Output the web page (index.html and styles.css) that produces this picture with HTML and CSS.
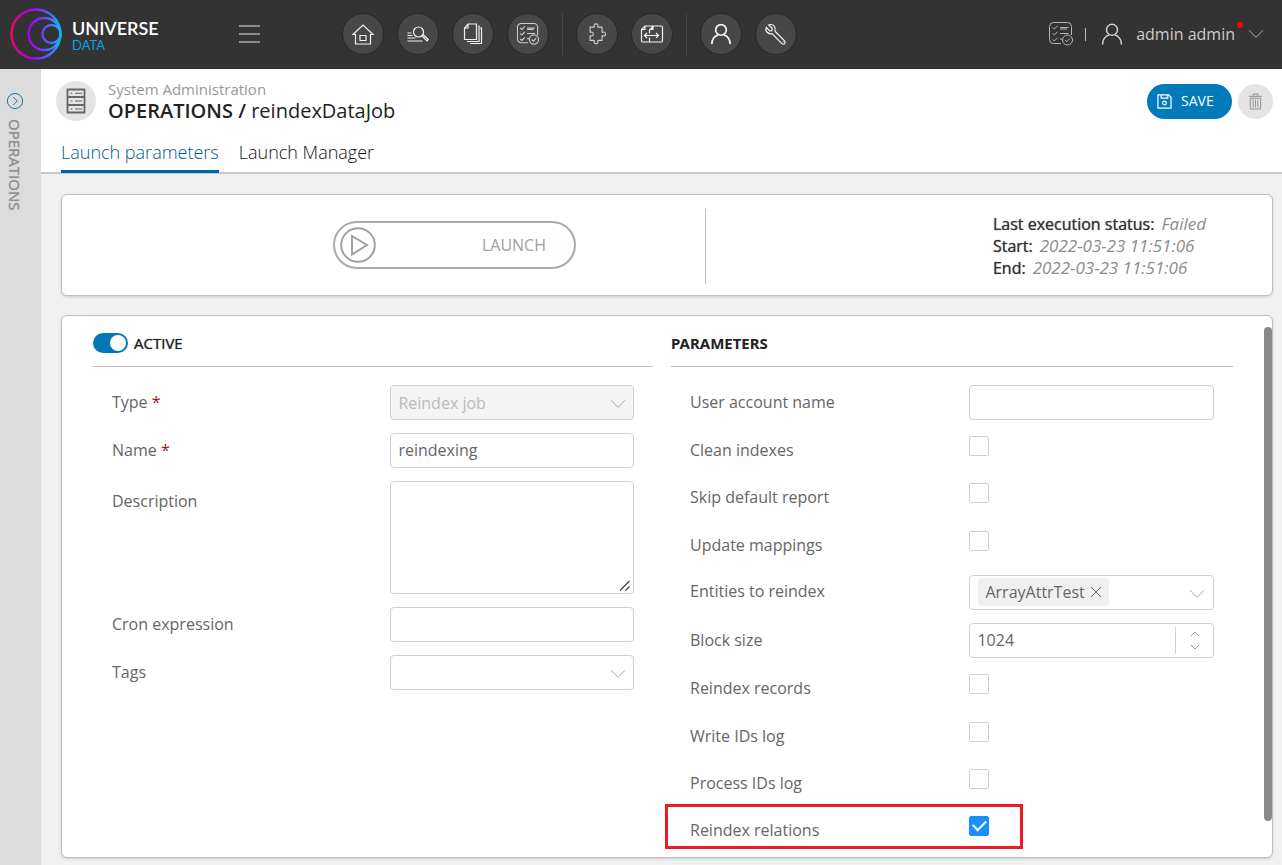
FILE: index.html
```html
<!DOCTYPE html>
<html lang="en">
<head>
<meta charset="utf-8">
<title>Universe Data - Operations</title>
<meta name="viewport" content="width=device-width, initial-scale=1">
<link rel="stylesheet" href="styles.css">
</head>
<body>
<svg class="defs" aria-hidden="true">
  <symbol id="i-chevron" viewBox="0 0 16 10"><path d="M1 1.200l7 7.200 7-7.200"/></symbol>
  <symbol id="i-tasks" viewBox="0 0 24 24">
    <path d="M12 21.500H4.500a4 4 0 0 1-4-4V4.500a4 4 0 0 1 4-4h14a4 4 0 0 1 4 4V13"/>
    <path d="M3.500 5.500l1.800 1.500 3.200-3.200M3.500 11.500l1.800 1.500 3.200-3.200M3.500 17.500l1.800 1.500 3.200-3.200M11 5.500h8.500M11 7h7M11 11.500h8.500M11 17h2"/>
    <circle cx="18.500" cy="18" r="5"/><path d="M16 18l1.800 1.800 3.200-3.400"/>
  </symbol>
  <symbol id="i-user" viewBox="0 0 22 22"><circle cx="11" cy="6.800" r="5.500"/><path d="M1.500 21.500c0-5 3-8.700 6.500-9.500M20.500 21.500c0-5-3-8.700-6.500-9.500"/></symbol>
</svg>

<header class="topbar">
  <a class="logo" href="#">
    <svg class="logo-mark" viewBox="0 0 52 52" aria-hidden="true">
      <defs><linearGradient id="ring" gradientUnits="userSpaceOnUse" x1="1" y1="0" x2="51" y2="0">
        <stop offset="0" stop-color="#ff0066"/><stop offset=".38" stop-color="#a400f5"/><stop offset=".52" stop-color="#8a1cff"/><stop offset="1" stop-color="#14b4f5"/>
      </linearGradient></defs>
      <g fill="none" stroke="url(#ring)" stroke-width="2.300"><circle cx="26" cy="26" r="24.500"/><circle cx="34.500" cy="26" r="16"/><circle cx="41.500" cy="26" r="9"/></g>
    </svg>
    <span class="logo-text"><span class="logo-name">UNIVERSE</span><span class="logo-sub">DATA</span></span>
  </a>
  <button class="burger" type="button" aria-label="Menu"><span></span><span></span><span></span></button>
  <nav class="nav" aria-label="Sections">
    <button type="button" class="nav-btn" aria-label="Home"><svg viewBox="0 0 24 24"><path d="M2 12.500L12 3l10 9.500h-2.500V22h-15v-9.500zM9 13.500h6v5H9z"/></svg></button>
    <button type="button" class="nav-btn" aria-label="Search"><svg viewBox="0 0 24 24"><path d="M1.500 11h4M1.500 13.500h5M1.500 16h8M1.500 19h15"/><circle cx="12.500" cy="10" r="5"/><path d="M15.700 13.500l5.300 5.300 1.300-1.300-5.500-5.200"/></svg></button>
    <button type="button" class="nav-btn" aria-label="Documents"><svg viewBox="0 0 24 24"><path d="M7 2h8.500v15.500H3.500V6zM7 2v4H3.500M17 4h1v15.500H6M19 6h1.500v15.500H9M3.500 6v12"/></svg></button>
    <button type="button" class="nav-btn nav-soft" aria-label="Tasks"><svg><use href="#i-tasks"/></svg></button>
    <span class="nav-sep"></span>
    <button type="button" class="nav-btn nav-soft" aria-label="Modules"><svg viewBox="0 0 24 24"><path d="M4.500 4.500h4c1.500 0 .3-.9.300-1.700 0-2.400 4.400-2.400 4.400 0 0 .8-1.200 1.700.3 1.700h4v5c0 1.500.9.300 1.700.300 2.800 0 2.800 4.400 0 4.400-.8 0-1.700-1.200-1.700.3v4.500h-4c-1.500 0-.3.900-.3 1.700 0 2.400-4.400 2.400-4.400 0 0-.8 1.200-1.700-.3-1.700h-4v-4.500c0-1.500.9-.3 1.700-.3 2.400 0 2.400-4.400 0-4.400-.8 0-1.700 1.200-1.700-.3z"/></svg></button>
    <button type="button" class="nav-btn" aria-label="Mapping"><svg viewBox="0 0 24 24"><path d="M5 4h16q1.500 0 1.500 1.500v13q0 1.500-1.500 1.500H3q-1.500 0-1.500-1.500V7.500zM5 4v3.500H1.500M13 4.500L9.500 8v3.500M9.500 15.500V20M13 4v3.500H9.500M5 13.500h13M7 11l-2.500 2.500L7 16M16 11l2.500 2.500L16 16"/></svg></button>
    <span class="nav-sep"></span>
    <button type="button" class="nav-btn nav-bold" aria-label="Users"><svg viewBox="-1.500 -1.500 26 26"><use href="#i-user" width="23" height="23"/></svg></button>
    <button type="button" class="nav-btn" aria-label="Settings"><svg viewBox="0 0 24 24"><path d="M6 2.600c-.8.100-1.400.4-1.400.4l3.600 3.300-.3 2.300-2.300.3-3.300-3.500C.8 9 4 12.600 8.300 11.800l9.600 9.800q1.500 1.200 2.700 0t0-2.700L11 9.200C12 5 9.500 2 6 2.600zM18.800 19.500l.5.500"/></svg></button>
  </nav>
  <div class="account">
    <button type="button" class="plain" aria-label="Task list"><svg class="ico-tasks"><use href="#i-tasks"/></svg></button>
    <span class="account-sep"></span>
    <button type="button" class="plain user">
      <svg class="ico-user"><use href="#i-user"/></svg>
      <span class="user-name">admin admin<span class="dot"></span></span>
      <svg class="chev"><use href="#i-chevron"/></svg>
    </button>
  </div>
</header>

<div class="body">
  <aside class="rail">
    <button type="button" class="plain rail-btn" aria-label="Expand panel"><svg viewBox="0 0 18 18"><circle cx="9" cy="9" r="7.600"/><path d="M7.300 5l4 4-4 4"/></svg></button>
    <span class="rail-title">OPERATIONS</span>
  </aside>

  <main class="main">
    <div class="page-head">
      <div class="title-row">
        <span class="title-icon"><svg viewBox="0 0 20 26" aria-hidden="true"><path d="M1.500 1.500h17v23h-17zM1.500 9h17M1.500 17h17"/><path class="thin" d="M9 5.300h7M9 13h7M9 21h7M4.500 5.300h2M4.500 13h2M4.500 21h2"/></svg></span>
        <div class="titles">
          <div class="section">System Administration</div>
          <h1><b>OPERATIONS /</b> reindexDataJob</h1>
        </div>
        <button type="button" class="save"><svg viewBox="0 0 16 16" aria-hidden="true"><path d="M1 1h11.500L15 3.500V15H1zM4.500 1v3.500h7V1"/><circle cx="8" cy="9.500" r="2"/></svg>SAVE</button>
        <button type="button" class="trash" aria-label="Delete"><svg viewBox="0 0 16 18"><path d="M1 3.500h14M5.500 3V1h5v2M2.500 5.500h11v11.500h-11zM5.500 7v8.500M8 7v8.500M10.500 7v8.500"/></svg></button>
      </div>
      <div class="tabs" role="tablist">
        <button type="button" role="tab" class="tab active" aria-selected="true">Launch parameters</button>
        <button type="button" role="tab" class="tab" aria-selected="false">Launch Manager</button>
      </div>
    </div>

    <div class="content">
      <section class="card launch">
        <div class="launch-left">
          <button type="button" class="launch-btn"><svg viewBox="0 0 36 36" aria-hidden="true"><circle cx="18" cy="18" r="16.800"/><path d="M12 9l15 9-15 9.500z"/></svg><span>LAUNCH</span></button>
        </div>
        <div class="launch-right">
          <div class="status">
            <div><b>Last execution status:</b><i>Failed</i></div>
            <div><b>Start:</b><i>2022-03-23 11:51:06</i></div>
            <div><b>End:</b><i>2022-03-23 11:51:06</i></div>
          </div>
        </div>
      </section>

      <section class="card params">
        <div class="col">
          <div class="col-head"><input type="checkbox" class="switch" id="active" checked><label for="active">ACTIVE</label></div>
          <div class="form">
            <div class="row"><label for="type">Type <em>*</em></label><span class="field"><select id="type" disabled><option>Reindex job</option></select><svg class="chev"><use href="#i-chevron"/></svg></span></div>
            <div class="row"><label for="name">Name <em>*</em></label><span class="field"><input id="name" type="text" value="reindexing"></span></div>
            <div class="row row-area"><label for="desc">Description</label><span class="field"><textarea id="desc"></textarea><svg class="grip" viewBox="0 0 12 12"><path d="M1 10.500l9.500-9.500M6.500 10.500l4-4"/></svg></span></div>
            <div class="row"><label for="cron">Cron expression</label><span class="field"><input id="cron" type="text"></span></div>
            <div class="row"><label for="tags">Tags</label><span class="field"><select id="tags"><option></option></select><svg class="chev"><use href="#i-chevron"/></svg></span></div>
          </div>
        </div>
        <div class="col">
          <div class="col-head"><h2>PARAMETERS</h2></div>
          <div class="form form-spread">
            <div class="row"><label for="user">User account name</label><span class="field"><input id="user" type="text"></span></div>
            <div class="row check"><label for="clean">Clean indexes</label><input type="checkbox" class="box" id="clean"></div>
            <div class="row check"><label for="skip">Skip default report</label><input type="checkbox" class="box" id="skip"></div>
            <div class="row check"><label for="upd">Update mappings</label><input type="checkbox" class="box" id="upd"></div>
            <div class="row"><label for="ent">Entities to reindex</label><span class="field multi"><span class="chip">ArrayAttrTest<button type="button" class="plain" aria-label="Remove ArrayAttrTest"><svg viewBox="0 0 12 12"><path d="M1 1l10 10M11 1L1 11"/></svg></button></span><input id="ent" type="text"><svg class="chev"><use href="#i-chevron"/></svg></span></div>
            <div class="row"><label for="block">Block size</label><span class="field"><input id="block" type="number" value="1024"><span class="spin"><button type="button" class="plain" aria-label="Increase"><svg viewBox="0 0 10 6"><path d="M1 5l4-4 4 4"/></svg></button><button type="button" class="plain" aria-label="Decrease"><svg viewBox="0 0 10 6"><path d="M1 1l4 4 4-4"/></svg></button></span></span></div>
            <div class="row check"><label for="rec">Reindex records</label><input type="checkbox" class="box" id="rec"></div>
            <div class="row check"><label for="wlog">Write IDs log</label><input type="checkbox" class="box" id="wlog"></div>
            <div class="row check"><label for="plog">Process IDs log</label><input type="checkbox" class="box" id="plog"></div>
            <div class="row check marked"><label for="rel">Reindex relations</label><input type="checkbox" class="box" id="rel" checked></div>
          </div>
        </div>
        <span class="thumb"></span>
      </section>
    </div>
  </main>
</div>
</body>
</html>
```
FILE: styles.css
```css
* { box-sizing: border-box; }
body {
  margin: 0;
  min-height: 100vh;
  display: flex;
  flex-direction: column;
  font: 16px/22px "Open Sans", "Noto Sans", sans-serif;
  color: #666;
  background: #f1f1f1;
}
button, input, select, textarea { font: inherit; color: inherit; }
button { cursor: pointer; }
svg { display: block; fill: none; stroke: currentColor; overflow: visible; }
.defs { position: absolute; width: 0; height: 0; }
.plain { border: 0; padding: 0; background: none; }

/* top bar */
.topbar {
  display: flex;
  align-items: center;
  height: 69px;
  padding: 0 18px 1px 10px;
  background: #333;
}
.logo { display: flex; align-items: center; gap: 10px; width: 229px; text-decoration: none; }
.logo-mark { width: 52px; height: 52px; }
.logo-text { display: flex; flex-direction: column; padding-top: 3px; font-family: Lato, sans-serif; }
.logo-name { font-size: 18px; line-height: 18px; font-weight: 600; color: #fff; }
.logo-sub { font-size: 13px; line-height: 16px; color: #00a4e4; }
.burger {
  display: flex;
  flex-direction: column;
  gap: 6px;
  width: 21px;
  padding: 0;
  border: 0;
  background: none;
}
.burger span { height: 2px; background: #8c8c8c; }
.nav { display: flex; align-items: center; gap: 13px; margin-left: 82px; }
.nav-btn {
  display: flex;
  align-items: center;
  justify-content: center;
  width: 42px;
  height: 42px;
  padding: 0;
  border: 1px solid #282828;
  border-radius: 50%;
  background: #474747;
  color: #f2f2f2;
}
.nav-btn svg { width: 24px; height: 24px; stroke-width: 1.200; }
.nav-soft { color: #ccc; }
.nav-btn.nav-soft svg { width: 22px; height: 22px; }
.nav-btn.nav-bold svg { stroke-width: 1.800; }
.nav-sep { width: 1px; height: 42px; background: #474747; }
.account { display: flex; align-items: center; margin-left: auto; color: #ccc; }
.ico-tasks { width: 24px; height: 24px; color: #b5b5b5; }
.account-sep { width: 1px; height: 13px; margin: 0 15px 0 12px; background: #bbb; }
.user { display: flex; align-items: center; gap: 13px; }
.ico-user { width: 22px; height: 22px; stroke-width: 1.500; }
.user-name { position: relative; }
.dot { position: absolute; top: -1px; right: -8px; width: 6px; height: 6px; border-radius: 50%; background: #f00; }
.chev { width: 16px; height: 10px; color: #aaa; stroke-width: 1; }

/* side rail */
.body { flex: 1; display: flex; }
.rail {
  display: flex;
  flex-direction: column;
  align-items: center;
  gap: 9px;
  width: 41px;
  padding: 23px 11px 0 0;
  background: #dcdcdc;
}
.rail-btn { color: #1878ab; }
.rail-btn svg { width: 18px; height: 18px; }
.rail-title { writing-mode: vertical-rl; font-size: 15px; line-height: 20px; color: #8c8c8c; text-shadow: 0 0 1px #a0a0a0; }

/* page head */
.main { flex: 1; min-width: 0; display: flex; flex-direction: column; }
.page-head { background: #fff; border-bottom: 2px solid #c8c8c8; }
.title-row { display: flex; align-items: center; padding: 11px 9px 0 15px; }
.title-icon {
  display: flex;
  align-items: center;
  justify-content: center;
  width: 40px;
  height: 40px;
  border-radius: 50%;
  background: #e4e4e4;
  color: #666;
}
.title-icon svg { width: 20px; height: 26px; stroke-width: 1.800; }
.title-icon .thin { stroke-width: 1; }
.titles { flex: 1; padding-left: 12px; }
.section { font-size: 15px; line-height: 19px; color: #999; }
h1 { margin: 0; font-size: 20px; line-height: 23px; font-weight: 400; color: #222; }
h1 b { font-weight: 600; }
.save {
  display: flex;
  align-items: center;
  gap: 9px;
  width: 85px;
  height: 35px;
  padding: 0 10px;
  border: 0;
  border-radius: 18px;
  background: #007ab8;
  color: #fff;
  font-size: 14px;
}
.save svg { width: 15px; height: 15px; stroke-width: 1.300; }
.trash {
  display: flex;
  align-items: center;
  justify-content: center;
  width: 35px;
  height: 35px;
  margin-left: 6px;
  padding: 0;
  border: 0;
  border-radius: 50%;
  background: #e4e4e4;
  color: #8c8c8c;
}
.trash svg { width: 15px; height: 17px; }
.tabs { display: flex; gap: 20px; padding: 9px 20px 0; }
.tab {
  height: 42px;
  margin-bottom: -1px;
  padding: 3px 0 0;
  border: 0;
  border-bottom: 3px solid transparent;
  background: none;
  font-size: 18px;
  font-weight: 300;
  color: #111;
}
.tab.active { color: #00598c; border-color: #00699c; }

/* cards */
.content { flex: 1; display: flex; flex-direction: column; gap: 19px; padding: 20px 9px 7px 20px; }
.card { border: 1px solid #bfbfbf; border-radius: 6px; background: #fff; box-shadow: 0 1px 3px rgba(0, 0, 0, .15); }
.launch { display: grid; grid-template-columns: 645fr 566fr; padding: 14px 0 11px; }
.launch-left { display: flex; align-items: flex-start; padding: 12px 0 0 271px; border-right: 1px solid #bfbfbf; }
.launch-btn {
  display: flex;
  align-items: center;
  justify-content: space-between;
  width: 243px;
  height: 48px;
  padding: 0 28px 0 5px;
  border: 2px solid #aaa;
  border-radius: 24px;
  background: #fff;
  color: #a0a0a0;
}
.launch-btn svg { width: 36px; height: 36px; stroke-width: 2; }
.launch-right { display: flex; justify-content: flex-end; padding: 4px 66px 5px 0; }
.status b { margin-right: 7px; font-weight: 400; color: #333; text-shadow: 0 0 1px #555; }
.status i { font-size: 17px; color: #8c8c8c; }

.params { position: relative; flex: 1; display: grid; grid-template-columns: 560fr 562fr; gap: 18px; padding: 0 39px 0 31px; }
.col { display: flex; flex-direction: column; }
.col-head { display: flex; align-items: center; gap: 6px; height: 51px; padding-top: 4px; border-bottom: 1px solid #bfbfbf; color: #222; font-size: 15px; }
.col-head label { text-shadow: 0 0 1px #555; }
h2 { margin: 0; font: 700 15px/22px "Noto Sans", sans-serif; }
.switch {
  appearance: none;
  display: flex;
  align-items: center;
  width: 35px;
  height: 20px;
  margin: 0;
  padding: 0 2px;
  border-radius: 10px;
  background: #bbb;
}
.switch::before { content: ""; width: 16px; height: 16px; border-radius: 50%; background: #fff; }
.switch:checked { justify-content: flex-end; background: #0078b4; }
.form { flex: 1; display: flex; flex-direction: column; gap: 13px; padding: 18px 19px 10px; }
.form-spread { gap: 12px; justify-content: space-between; }
.row { display: grid; grid-template-columns: 8fr 7fr; align-items: center; height: 35px; }
.row label { padding-bottom: 2px; }
.row em { font-style: normal; color: #a01414; }
.row-area { height: 113px; align-items: start; }
.row-area label { padding-top: 9px; }
.check { position: relative; height: 34px; align-items: start; }
.check label { padding-top: 6px; }
.field { position: relative; display: block; height: 100%; min-width: 0; }
.field > input, .field > select, .field > textarea {
  display: block;
  width: 100%;
  height: 100%;
  padding: 0 7px 2px;
  border: 1px solid #d0d0d0;
  border-radius: 4px;
  background: #fff;
  appearance: none;
}
.field > select { padding: 0 7px; }
.field > textarea { resize: vertical; }
textarea::-webkit-resizer { display: none; }
.field > select:disabled { background: #f4f4f4; color: #bbb; opacity: 1; }
.field .chev { position: absolute; top: 14px; right: 8px; pointer-events: none; }
.grip { position: absolute; right: 3px; bottom: 2px; width: 12px; height: 12px; color: #444; stroke-width: 1.300; pointer-events: none; }
.field.multi { display: flex; align-items: center; padding-left: 8px; border: 1px solid #d0d0d0; border-radius: 4px; }
.field.multi > input { flex: 1; width: 0; height: 28px; padding: 0; border: 0; background: none; }
.multi .chev { top: 13px; }
.chip { display: flex; align-items: center; gap: 5px; height: 28px; padding: 0 7px; border-radius: 4px; background: #f0f0f0; }
.chip svg { width: 12px; height: 12px; stroke-width: 1; }
input[type="number"]::-webkit-inner-spin-button { appearance: none; margin: 0; }
.spin {
  position: absolute;
  top: 4px;
  right: 1px;
  bottom: 4px;
  display: flex;
  flex-direction: column;
  align-items: center;
  justify-content: space-evenly;
  width: 38px;
  border-left: 1px solid #d0d0d0;
  color: #999;
}
.spin button { padding: 2px 0; }
.spin svg { width: 10px; height: 6px; }
.box {
  appearance: none;
  display: flex;
  align-items: center;
  justify-content: center;
  width: 20px;
  height: 20px;
  margin: 3px 0 0;
  border: 1px solid #d0d0d0;
  border-radius: 2px;
  background: #fff;
}
.box:checked { border-color: #1890ff; background: #1890ff; }
.box:checked::before {
  content: "";
  width: 11px;
  height: 6px;
  margin-bottom: 3px;
  border: solid #fff;
  border-width: 0 0 2px 2px;
  transform: rotate(-45deg);
}
.marked::after {
  content: "";
  position: absolute;
  top: -9px;
  bottom: -2px;
  left: -25px;
  width: calc(53% + 74px);
  border: 3px solid #ed1c24;
  pointer-events: none;
}
.thumb { position: absolute; top: 11px; right: 0; bottom: 36px; width: 8px; border-radius: 4px; background: #888; }
```
